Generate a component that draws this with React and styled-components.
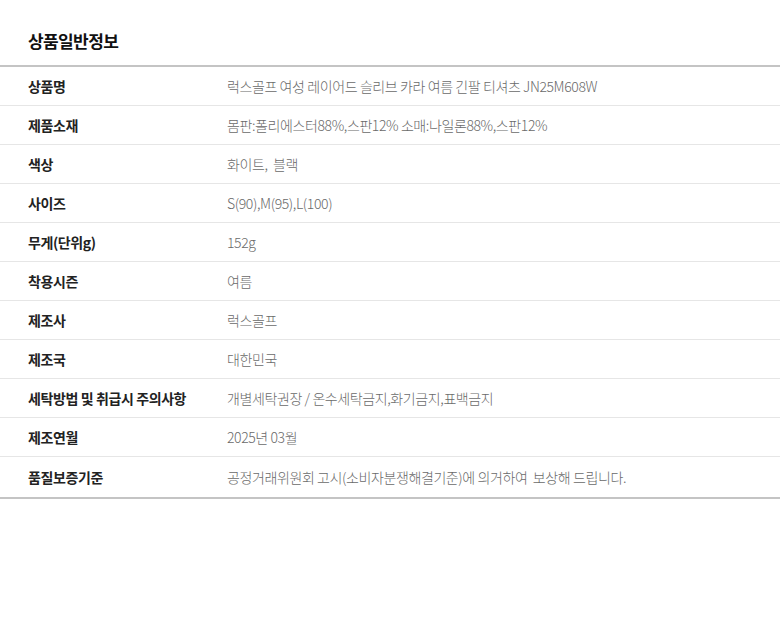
import React from 'react'
import styled, { createGlobalStyle } from 'styled-components'

const Global = createGlobalStyle`
    body {
        margin: 0;
        background: #fff;
        font-family: "Noto Sans CJK KR", "Noto Sans", sans-serif;
    }
`

const Wrap = styled.div`
    padding-top: 29px;
`

const Title = styled.h2`
    margin: 0;
    padding: 0 28px 12px;
    font-size: 17px;
    font-weight: 700;
    line-height: 24px;
    color: #111;
    letter-spacing: -0.6px;
`

const Table = styled.div`
    border-top: 2px solid #c4c4c4;
    border-bottom: 2px solid #c4c4c4;
`

const Row = styled.div`
    display: grid;
    grid-template-columns: 199px 1fr;
    align-items: center;
    height: ${p => (p.last ? 40 : 38)}px;
    padding-left: 28px;
    border-top: ${p => (p.first ? 'none' : '1px solid #e6e6e6')};
`

const Label = styled.div`
    font-size: 14px;
    font-weight: 700;
    color: #222;
    letter-spacing: -0.4px;
`

const Value = styled.div`
    font-size: 14px;
    font-weight: 300;
    color: #6a6a6a;
    letter-spacing: -0.4px;
    white-space: pre;
`

const rows = [
    ['상품명', '럭스골프 여성 레이어드 슬리브 카라 여름 긴팔 티셔츠 JN25M608W'],
    ['제품소재', '몸판:폴리에스터88%,스판12% 소매:나일론88%,스판12%'],
    ['색상', '화이트,  블랙'],
    ['사이즈', 'S(90),M(95),L(100)'],
    ['무게(단위g)', '152g'],
    ['착용시즌', '여름'],
    ['제조사', '럭스골프'],
    ['제조국', '대한민국'],
    ['세탁방법 및 취급시 주의사항', '개별세탁권장 / 온수세탁금지,화기금지,표백금지'],
    ['제조연월', '2025년 03월'],
    ['품질보증기준', '공정거래위원회 고시(소비자분쟁해결기준)에 의거하여  보상해 드립니다.'],
]

export default function App() {
    return (
        <Wrap>
            <Global />
            <Title>상품일반정보</Title>
            <Table>
                {rows.map(([k, v], i) => (
                    <Row key={k} first={i === 0} last={i === rows.length - 1}>
                        <Label>{k}</Label>
                        <Value>{v}</Value>
                    </Row>
                ))}
            </Table>
        </Wrap>
    )
}
